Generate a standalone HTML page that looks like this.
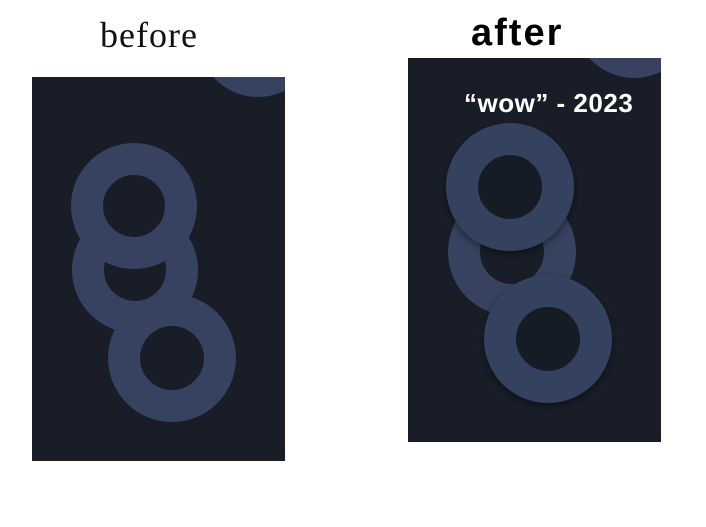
<!DOCTYPE html>
<html><head><style>
body{margin:0;width:706px;height:527px;background:#fff;overflow:hidden;position:relative;font-family:"Liberation Sans",sans-serif}
.t1{position:absolute;left:100px;top:14px;font-family:"Liberation Serif",serif;font-size:36px;color:#111;letter-spacing:1px}
.t2{position:absolute;left:471px;top:12px;font-size:38px;font-weight:bold;color:#000;letter-spacing:2px}
svg{position:absolute}
</style></head><body>
<div class="t1">before</div>
<div class="t2">after</div>
<svg style="left:32px;top:77px" width="253" height="384" viewBox="32 77 253 384">
<rect x="32" y="77" width="253" height="384" fill="#181d28"/>
<circle cx="258" cy="37" r="60" fill="#36425f"/>
<circle cx="135" cy="270" r="47" fill="none" stroke="#36425f" stroke-width="32"/>
<circle cx="134" cy="206" r="47" fill="#181d28" stroke="#36425f" stroke-width="32"/>
<circle cx="172" cy="358" r="48" fill="#181d28" stroke="#36425f" stroke-width="32"/>
</svg>
<svg style="left:408px;top:58px" width="253" height="384" viewBox="408 58 253 384">
<defs><filter id="s" x="-30%" y="-30%" width="160%" height="160%"><feDropShadow dx="0" dy="3" stdDeviation="4" flood-color="#000" flood-opacity="0.45"/></filter></defs>
<rect x="408" y="58" width="253" height="384" fill="#181d28"/>
<circle cx="634" cy="18" r="60" fill="#36425f"/>
<text x="464" y="112" font-family="Liberation Sans, sans-serif" font-weight="bold" font-size="26" letter-spacing="0.5" fill="#fff">“wow” - 2023</text>
<circle cx="512" cy="252" r="48" fill="none" stroke="#36425f" stroke-width="32"/>
<circle cx="510" cy="187" r="48" fill="#181d28" stroke="#36425f" stroke-width="32" filter="url(#s)"/>
<circle cx="548" cy="339" r="48" fill="#181d28" stroke="#36425f" stroke-width="32" filter="url(#s)"/>
</svg>
</body></html>
